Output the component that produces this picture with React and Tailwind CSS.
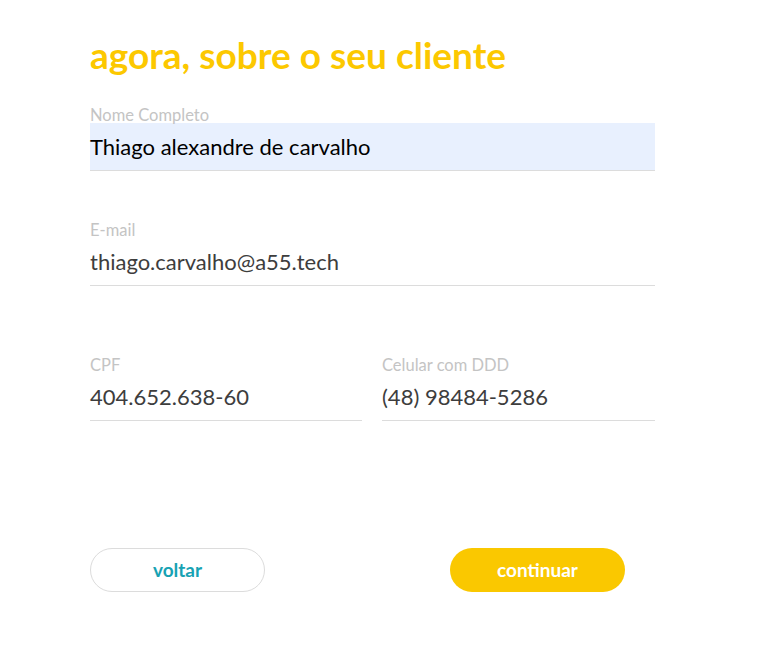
const Field = ({ label, value, filled, className = "" }) => (
  <div className={className}>
    <label className="block text-[16.5px] leading-4 text-[#c4c4c4]">{label}</label>
    <div
      className={`h-12 flex items-center border-b border-[#dcdcdc] text-[22px] ${
        filled ? "bg-[#e8f0fe] text-black" : "text-[#3d3d3d]"
      }`}
    >
      {value}
    </div>
  </div>
);

export default function App() {
  return (
    <div
      className="min-h-screen bg-white"
      style={{ fontFamily: "Lato, 'Noto Sans', sans-serif" }}
    >
      <div className="w-[565px] ml-[90px] pt-[35px]">
        <h1 className="text-[37px] leading-10 font-bold text-[#fcc800]">
          agora, sobre o seu cliente
        </h1>

        <Field
          className="mt-[32px]"
          label="Nome Completo"
          value="Thiago alexandre de carvalho"
          filled
        />
        <Field
          className="mt-[51px]"
          label="E-mail"
          value="thiago.carvalho@a55.tech"
        />

        <div className="mt-[71px] grid grid-cols-[272px_273px] gap-5">
          <Field label="CPF" value="404.652.638-60" />
          <Field label="Celular com DDD" value="(48) 98484-5286" />
        </div>

        <div className="mt-[127px] flex">
          <button className="w-[175px] h-11 rounded-full border border-[#dcdcdc] bg-white text-[#17a2b3] text-[19px] font-bold">
            voltar
          </button>
          <button className="ml-[185px] w-[175px] h-11 rounded-full bg-[#fac800] text-white text-[19px] font-bold">
            continuar
          </button>
        </div>
      </div>
    </div>
  );
}
